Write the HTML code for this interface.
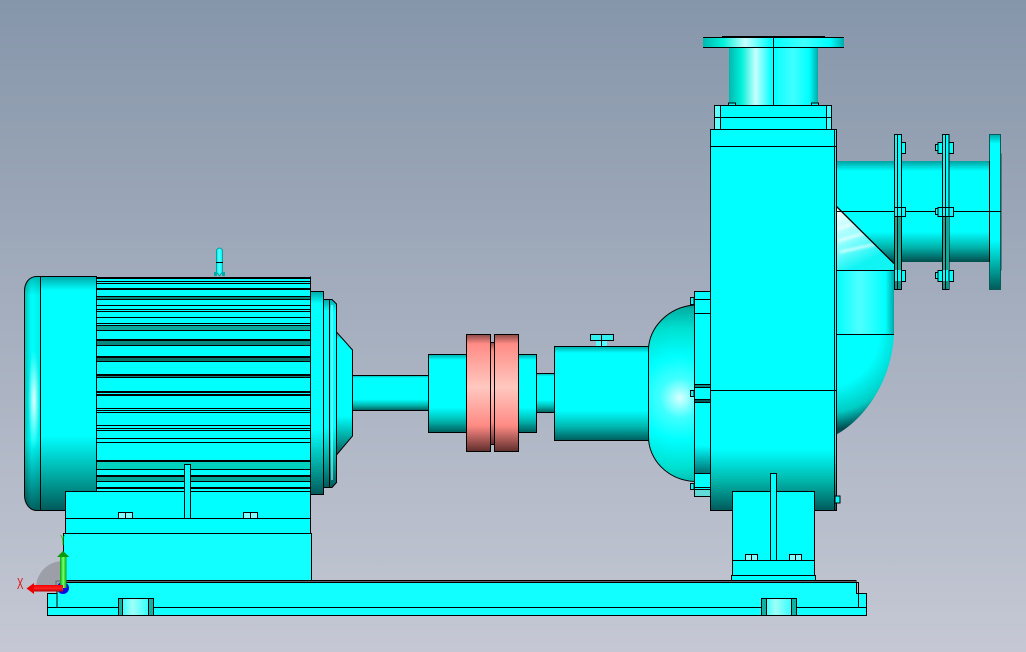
<!DOCTYPE html>
<html><head><meta charset="utf-8"><style>
html,body{margin:0;padding:0;width:1026px;height:652px;overflow:hidden;background:#a5aebd}
svg{display:block}
.k{stroke:#000;stroke-width:1;fill:none;shape-rendering:crispEdges}
.c{fill:#0ff;stroke:#000;stroke-width:1;shape-rendering:crispEdges}
.b{fill:#12ffff;stroke:#000;stroke-width:1;shape-rendering:crispEdges}
.t{fill:#038a80;shape-rendering:crispEdges}
</style></head><body>
<svg width="1026" height="652" viewBox="0 0 1026 652" xmlns="http://www.w3.org/2000/svg">
<defs>
<linearGradient id="bg" x1="0" y1="0" x2="0" y2="1"><stop offset="0" stop-color="#8696aa"/><stop offset="1" stop-color="#c5c8d4"/></linearGradient>
<linearGradient id="cyl" x1="0" y1="0" x2="0" y2="1"><stop offset="0" stop-color="#0aa"/><stop offset=".07" stop-color="#0ff"/><stop offset=".68" stop-color="#0ff"/><stop offset=".85" stop-color="#00b8b0"/><stop offset="1" stop-color="#005c5c"/></linearGradient>
<linearGradient id="capv" x1="0" y1="0" x2="0" y2="1"><stop offset="0" stop-color="#00a8a8"/><stop offset=".06" stop-color="#0ff"/><stop offset=".68" stop-color="#0ff"/><stop offset=".84" stop-color="#00b0a8"/><stop offset="1" stop-color="#005a5a"/></linearGradient>
<linearGradient id="caseg" x1="0" y1="0" x2="0" y2="1"><stop offset="0" stop-color="#0ff"/><stop offset=".84" stop-color="#0ff"/><stop offset=".92" stop-color="#00b8ac"/><stop offset="1" stop-color="#005a5a"/></linearGradient>
<linearGradient id="neck" x1="0" y1="0" x2="1" y2="0"><stop offset="0" stop-color="#00b8b0"/><stop offset=".14" stop-color="#00f0d8"/><stop offset=".3" stop-color="#c8ffff"/><stop offset=".48" stop-color="#0ff"/><stop offset=".72" stop-color="#40ffff"/><stop offset=".9" stop-color="#0ff"/><stop offset="1" stop-color="#00aaaa"/></linearGradient>
<linearGradient id="red" x1="0" y1="0" x2="0" y2="1"><stop offset="0" stop-color="#8c4a46"/><stop offset=".08" stop-color="#ff8b85"/><stop offset=".45" stop-color="#ffc8c0"/><stop offset=".78" stop-color="#ff8a84"/><stop offset="1" stop-color="#5e2e2c"/></linearGradient>
<linearGradient id="pipe" x1="0" y1="0" x2="0" y2="1"><stop offset="0" stop-color="#00a0a0"/><stop offset=".1" stop-color="#0ff"/><stop offset=".7" stop-color="#0ff"/><stop offset=".86" stop-color="#00b0a8"/><stop offset="1" stop-color="#004c4c"/></linearGradient>
<linearGradient id="elb" x1="0" y1="0" x2="1" y2="0"><stop offset="0" stop-color="#0ff"/><stop offset=".4" stop-color="#50ffff"/><stop offset=".85" stop-color="#0ff"/><stop offset="1" stop-color="#00a8a8"/></linearGradient>
<radialGradient id="elbr" gradientUnits="userSpaceOnUse" cx="826" cy="334" r="96"><stop offset="0" stop-color="#0ff"/><stop offset=".55" stop-color="#0ff"/><stop offset=".82" stop-color="#00ccc4"/><stop offset="1" stop-color="#004c50"/></radialGradient>
<radialGradient id="bulb" gradientUnits="userSpaceOnUse" cx="680" cy="398" r="100"><stop offset="0" stop-color="#d8ffff"/><stop offset=".2" stop-color="#40ffff"/><stop offset=".42" stop-color="#0ff"/><stop offset=".7" stop-color="#00e0d0"/><stop offset=".9" stop-color="#00b0a4"/><stop offset="1" stop-color="#006c6c"/></radialGradient>
<linearGradient id="caph" x1="0" y1="0" x2="1" y2="0"><stop offset="0" stop-color="#00c4b4"/><stop offset=".45" stop-color="#0ff"/><stop offset="1" stop-color="#00eee4"/></linearGradient>
<radialGradient id="caphl"><stop offset="0" stop-color="#e8ffff"/><stop offset="1" stop-color="#c0ffff" stop-opacity="0"/></radialGradient>
<linearGradient id="fade" x1="0" y1="0" x2="0" y2="1"><stop offset="0" stop-color="#000" stop-opacity=".25"/><stop offset=".08" stop-color="#000" stop-opacity="0"/><stop offset=".7" stop-color="#000" stop-opacity="0"/><stop offset="1" stop-color="#000" stop-opacity=".62"/></linearGradient>
<linearGradient id="tri" gradientUnits="userSpaceOnUse" x1="838" y1="208" x2="866" y2="262"><stop offset="0" stop-color="#ffffff"/><stop offset=".55" stop-color="#90ffff"/><stop offset="1" stop-color="#10f4f4"/></linearGradient>
<linearGradient id="seal" x1="0" y1="0" x2="0" y2="1"><stop offset="0" stop-color="#0ff"/><stop offset=".6" stop-color="#0ff"/><stop offset="1" stop-color="#006c6c"/></linearGradient>
<linearGradient id="gr" x1="0" y1="0" x2="1" y2="0"><stop offset="0" stop-color="#0a0"/><stop offset=".5" stop-color="#7f7"/><stop offset="1" stop-color="#0a0"/></linearGradient>
<linearGradient id="rd" x1="0" y1="0" x2="0" y2="1"><stop offset="0" stop-color="#e00"/><stop offset=".5" stop-color="#f22"/><stop offset="1" stop-color="#b00"/></linearGradient>
<linearGradient id="pock" x1="0" y1="0" x2="1" y2="0"><stop offset="0" stop-color="#12ffff"/><stop offset=".4" stop-color="#9ffff8"/><stop offset="1" stop-color="#12ffff"/></linearGradient>
<filter id="bl" x="-20%" y="-20%" width="140%" height="140%"><feGaussianBlur stdDeviation="1.2"/></filter>
<clipPath id="trc"><path d="M837 207L894 263V270.5H837Z"/></clipPath>
</defs>
<rect width="1026" height="652" fill="url(#bg)"/>

<!-- base -->
<path class="b" d="M47.5 593.5H57V582H856.5V593.5H866.5V615.5H47.5Z"/>
<path class="k" d="M57 580.5H856.5M57 582.5H858.5V607.5M57 582V607.5M47.5 607.5H866.5"/>
<rect x="118.5" y="598.5" width="35" height="17" class="k" style="fill:url(#pock)"/>
<rect x="119" y="599" width="3.5" height="16" style="fill:#12b0a0"/><rect x="149" y="599" width="4" height="16" style="fill:#12b0a0"/>
<path class="k" d="M122.5 598.5V615.5M148.5 598.5V615.5"/>
<rect x="761.5" y="598.5" width="35" height="17" class="k" style="fill:url(#pock)"/>
<rect x="762" y="599" width="4.5" height="16" style="fill:#12b0a0"/><rect x="792" y="599" width="4" height="16" style="fill:#12b0a0"/>
<path class="k" d="M766.5 598.5V615.5M791.5 598.5V615.5"/>

<!-- motor cap -->
<path d="M40.5 276.5H37C29 276.5 24.5 283 24.5 291V495C24.5 503 29 510.5 37 510.5H40.5Z" fill="url(#caph)"/>
<ellipse cx="34" cy="400" rx="6" ry="50" fill="url(#caphl)"/>
<path d="M40.5 276.5H37C29 276.5 24.5 283 24.5 291V495C24.5 503 29 510.5 37 510.5H40.5Z" fill="url(#fade)" stroke="#000" stroke-width="1"/>
<rect x="40.5" y="276.5" width="56" height="234" class="k" style="fill:url(#capv)"/>

<!-- fins -->
<rect x="96.5" y="277" width="214" height="214" fill="#0ff"/>
<g shape-rendering="crispEdges">
<rect x="97" y="325" width="213" height="6" fill="#0da79c"/>
<rect x="97" y="340" width="213" height="6" fill="#068a80"/>
<rect x="97" y="357" width="213" height="5" fill="#04736a"/>
<rect x="97" y="375" width="213" height="3" fill="#06857c"/>
<rect x="97" y="462" width="213" height="7" fill="#00d0bc"/>
<rect x="97" y="477" width="213" height="4" fill="#00a69a"/>
<rect x="97" y="297" width="213" height="3" fill="#068a80"/>
</g>
<path class="k" d="M97 277.5H310M97 278.5H310M97 281.5H310M97 283.5H310M97 288.5H310M97 289.5H310M97 296.5H310M97 299.5H310M97 305.5H310M97 309.5H310M97 311.5H310M97 317.5H310M97 323.5H310M97 325.5H310M97 330.5H310M97 339.5H310M97 340.5H310M97 345.5H310M97 356.5H310M97 357.5H310M97 361.5H310M97 374.5H310M97 375.5H310M97 377.5H310M97 391.5H310M97 392.5H310M97 394.5H310M97 395.5H310M97 408.5H310M97 410.5H310M97 412.5H310M97 425.5H310M97 428.5H310M97 430.5H310M97 438.5H310M97 442.5H310M97 460.5H310M97 461.5H310M97 469.5H310M97 475.5H310M97 476.5H310M97 481.5H310M97 487.5H310M97 488.5H310"/>
<path class="k" d="M96.5 276.5V491M310.5 276.5V491"/>

<!-- eyebolt -->
<path d="M216.5 250Q219.5 246 222.5 250V272L219.5 276L216.5 272Z" fill="#0ff" stroke="#0b9090" stroke-width=".8"/>
<path d="M219.5 249V273" stroke="#60ffff" stroke-width="2"/>
<path class="k" d="M216 262.5H223"/>
<rect x="214" y="272" width="3" height="4" fill="#0aa"/><rect x="222" y="272" width="3" height="4" fill="#0aa"/>

<!-- front motor -->
<path d="M336.5 332L352.5 350V436L336.5 455Z" fill="url(#capv)" stroke="#000" stroke-width="1"/>
<rect x="310.5" y="291.5" width="13" height="203" class="k" style="fill:url(#capv)"/>
<path d="M323.5 299.5H332L336.5 304V482.5L332 487.5H323.5Z" fill="url(#capv)" stroke="#000" stroke-width="1"/>
<path class="k" d="M329.5 299.5V487.5"/>
<path d="M332 305V480" stroke="#b8ffff" stroke-width="1.5" opacity=".7"/>

<!-- feet block -->
<rect x="65.5" y="491.5" width="245" height="27" class="c"/>
<rect x="65.5" y="518.5" width="245" height="15" class="c"/>
<rect x="63.5" y="533.5" width="248" height="47" class="b"/>
<rect x="184.5" y="464.5" width="6" height="54" class="c"/>
<rect x="118.5" y="512.5" width="14" height="6" class="k" style="fill:#80ffff"/><path class="k" d="M125.5 512.5V518.5"/>
<rect x="243.5" y="512.5" width="14" height="6" class="k" style="fill:#80ffff"/><path class="k" d="M250.5 512.5V518.5"/>

<!-- shaft and coupling -->
<rect x="352.5" y="375.5" width="76" height="35" class="k" style="fill:url(#cyl)"/>
<rect x="428.5" y="354.5" width="38" height="78" class="k" style="fill:url(#cyl)"/>
<rect x="518.5" y="354.5" width="18" height="78" class="k" style="fill:url(#cyl)"/>
<rect x="490.5" y="342.5" width="4" height="102" class="k" style="fill:url(#red)"/>
<rect x="466.5" y="334.5" width="24" height="117" class="k" style="fill:url(#red)"/>
<rect x="494.5" y="334.5" width="24" height="117" class="k" style="fill:url(#red)"/>
<rect x="536.5" y="373.5" width="18" height="39" class="k" style="fill:url(#cyl)"/>

<!-- bearing housing -->
<rect x="596" y="341" width="11" height="6" fill="#5ff"/>
<path d="M601.5 341V346" stroke="#000"/>
<rect x="590.5" y="334.5" width="23" height="6" class="k" style="fill:#30f0f0"/>
<path class="k" d="M601.5 334.5V340.5"/>
<rect x="554.5" y="346.5" width="94" height="94" class="k" style="fill:url(#cyl)"/>

<!-- bulb -->
<path d="M694.5 305C668 307 648.5 328 648.5 350V437C648.5 459 667 480 694.5 481.5Z" fill="url(#bulb)" stroke="#000" stroke-width="1"/>

<!-- seal plate -->
<rect x="694.5" y="291.5" width="16" height="205" fill="#0ff" stroke="#000" stroke-width="1" shape-rendering="crispEdges"/>
<rect x="695" y="403" width="15" height="71" style="fill:url(#seal)"/>
<rect x="695" y="385" width="15" height="3" fill="#0a8a80"/><rect x="695" y="400" width="15" height="3" fill="#055"/>
<rect x="695" y="489" width="15" height="7" fill="#5fdcd8"/>
<path class="k" d="M694.5 299.5H710M694.5 313.5H710M694.5 384.5H710M694.5 387.5H710M694.5 399.5H710M694.5 402.5H710M694.5 473.5H710M694.5 487.5H710M694.5 489.5H710"/>
<path class="k" d="M690.5 297.5H694V304.5H690.5ZM690.5 390.5H694V396.5H690.5ZM690.5 483.5H694V489.5H690.5Z" style="fill:#0ff"/>

<!-- outlet pipe -->
<rect x="836" y="161" width="153" height="101" fill="url(#pipe)"/>

<!-- elbow -->
<path d="M836.5 270.5H894V330C894 375 868 417 836.5 434.5Z" fill="url(#elbr)"/>
<rect x="836.5" y="271" width="57.5" height="63" fill="url(#elb)"/>
<path d="M837 207L894 263V270.5H837Z" fill="url(#tri)"/>
<g clip-path="url(#trc)"><g filter="url(#bl)" stroke="#fff" stroke-width="2.5" opacity=".75" fill="none">
<path d="M838 229L858 222M838 241L868 232M840 252L876 244"/></g></g>
<path d="M836.5 206.5L894 263.5" stroke="#000" stroke-width="1.3"/>
<path class="k" d="M836.5 211.5H1001"/>
<path class="k" d="M836.5 270.5H894M836.5 334.5H894"/>

<!-- flanges right -->
<g>
<rect x="901" y="142.5" width="4.5" height="11" class="k" style="fill:#0ff"/><rect x="901" y="207.5" width="4.5" height="9" class="k" style="fill:#0ff"/><rect x="901" y="270.5" width="4.5" height="11" class="k" style="fill:#0ff"/>
<rect x="894.5" y="134.5" width="7" height="155" class="k" style="fill:#0ff"/>
<rect x="895" y="217" width="6" height="53" fill="#12a898"/>
<rect x="895" y="281" width="6" height="8" fill="#0c9488"/>
<path class="k" d="M897.5 134.5V289.5M894.5 207.5H901M894.5 216.5H901"/>
</g>
<g>
<path class="k" d="M935.5 144.5H938V150.5H935.5ZM935.5 208.5H938V214.5H935.5ZM935.5 272.5H938V278.5H935.5Z" style="fill:#0ff"/>
<rect x="938" y="142.5" width="4.5" height="11" class="k" style="fill:#0ff"/><rect x="938" y="207.5" width="4.5" height="9" class="k" style="fill:#0ff"/><rect x="938" y="270.5" width="4.5" height="11" class="k" style="fill:#0ff"/>
<rect x="949" y="142.5" width="4.5" height="11" class="k" style="fill:#0ff"/><rect x="949" y="207.5" width="4.5" height="9" class="k" style="fill:#0ff"/><rect x="949" y="270.5" width="4.5" height="11" class="k" style="fill:#0ff"/>
<rect x="942.5" y="134.5" width="6.5" height="155" class="k" style="fill:#0ff"/>
<rect x="943" y="217" width="6" height="53" fill="#12a898"/>
<rect x="943" y="281" width="6" height="8" fill="#0c9488"/>
<path class="k" d="M945.5 134.5V289.5M942.5 207.5H949M942.5 216.5H949"/>
</g>
<rect x="1000" y="153.5" width="1.5" height="117" fill="#005050"/>
<rect x="989.5" y="134.5" width="11" height="155" fill="url(#capv)" stroke="#0a5a5a" stroke-width="1" shape-rendering="crispEdges"/>
<path class="k" d="M989.5 161V262M989 211.5H1001"/>

<!-- casing -->
<rect x="710.5" y="129.5" width="126" height="381" class="k" style="fill:url(#caseg)"/>
<path class="k" d="M834.5 129.5V510.5M710.5 146.5H836.5M710.5 390.5H836.5"/>
<rect x="835" y="496" width="5" height="7" class="k" style="fill:#0ff"/>

<!-- top -->
<rect x="729" y="47" width="89" height="58" fill="url(#neck)"/>
<rect x="703" y="37.5" width="141" height="10" fill="url(#neck)"/>
<path class="k" d="M703 37.5H844M703 47.5H844M773.5 37.5V105M722 36.5H825"/>
<rect x="728.5" y="103" width="7" height="3" class="k" style="fill:#0ff"/><rect x="811.5" y="103" width="7" height="3" class="k" style="fill:#0ff"/>
<rect x="714.5" y="105.5" width="117" height="24" class="c"/>
<rect x="715" y="106" width="5" height="23" fill="#60ffff"/><rect x="827" y="106" width="4" height="23" fill="#40ffff"/>
<path class="k" d="M720.5 105.5V129.5M826.5 105.5V129.5M714.5 117.5H831.5"/>

<!-- pump foot -->
<rect x="732.5" y="491.5" width="82" height="69" class="c"/>
<rect x="732.5" y="560.5" width="82" height="15" class="c"/>
<rect x="731.5" y="575.5" width="84" height="5" class="c"/>
<rect x="770.5" y="473.5" width="6" height="87" class="c"/>
<rect x="745.5" y="554.5" width="12" height="6" class="k" style="fill:#80ffff"/><path class="k" d="M751.5 554.5V560.5"/>
<rect x="789.5" y="554.5" width="12" height="6" class="k" style="fill:#80ffff"/><path class="k" d="M795.5 554.5V560.5"/>

<!-- triad -->
<path d="M63 588H36A27 27 0 0 1 63 561Z" fill="#9d9fa8"/>
<rect x="56" y="581" width="7" height="7" fill="none" stroke="#5a6a70" stroke-width="1"/>
<circle cx="63" cy="588" r="6" fill="#0a0ae6"/>
<rect x="60" y="556" width="6.5" height="32" fill="url(#gr)"/>
<path d="M57 557L63 551L69.5 557Z" fill="#0a9a0a"/>
<path d="M63 537V545" stroke="#0c0" stroke-width="1" fill="none"/>
<rect x="33" y="585" width="30" height="6.5" fill="url(#rd)"/>
<path d="M34 583L26.5 588.5L34 594Z" fill="#e00"/>
<text transform="translate(17 589) scale(.6 1)" font-family="'Liberation Sans',sans-serif" font-size="16" fill="#e01010">X</text>
<text x="60" y="541" font-family="'Liberation Sans',sans-serif" font-size="8" fill="#10c010">Y</text>
</svg>
</body></html>
